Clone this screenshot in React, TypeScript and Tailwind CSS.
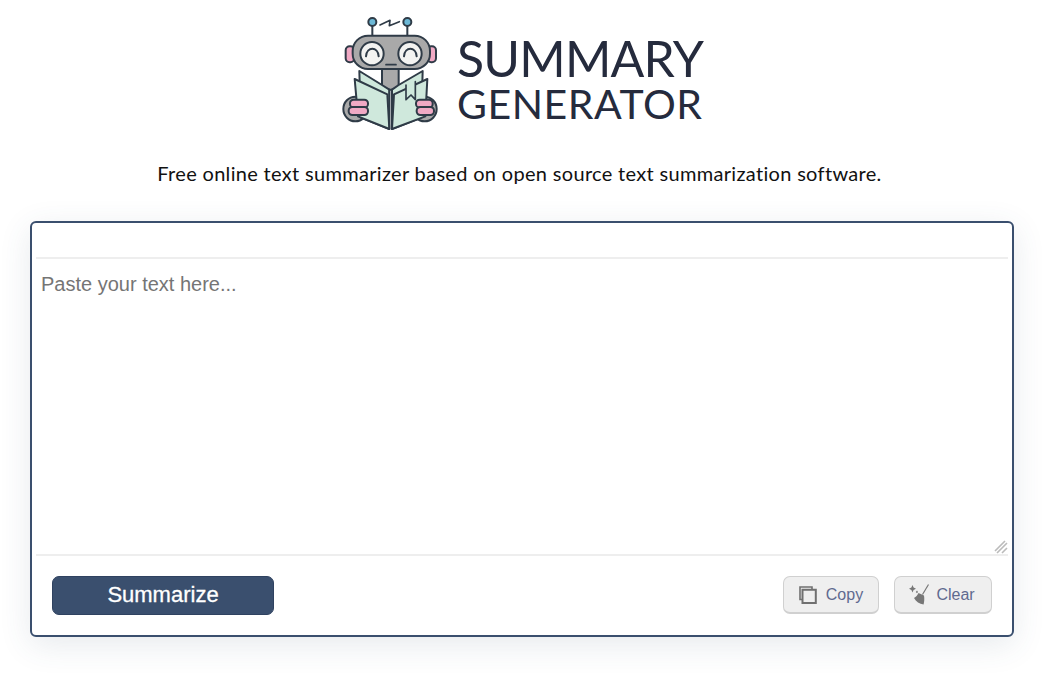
import React from "react";

const Robot = () => (
  <svg viewBox="0 0 360 390" className="w-[120px] h-[130px] shrink-0" fill="none" stroke="#2f3b47" strokeWidth="6" strokeLinejoin="round" strokeLinecap="round">
    {/* antenna */}
    <path d="M127 62V92M232 62V92" />
    <circle cx="127" cy="51" r="12" fill="#6cb8d6" />
    <circle cx="232" cy="51" r="12" fill="#6cb8d6" />
    <path d="M150 60L180 46L178 62L208 50" strokeWidth="5" />
    {/* ears */}
    <rect x="47" y="124" width="26" height="48" rx="12" fill="#f0a9c4" />
    <rect x="292" y="124" width="26" height="48" rx="12" fill="#f0a9c4" />
    {/* hips */}
    <ellipse cx="76" cy="312" rx="36" ry="37" fill="#a9a9a9" />
    <ellipse cx="284" cy="312" rx="36" ry="37" fill="#a9a9a9" />
    {/* head */}
    <rect x="156" y="188" width="50" height="66" fill="#a9a9a9" />
    <rect x="68" y="92" width="232" height="100" rx="46" fill="#a9a9a9" />
    <circle cx="126" cy="146" r="35" fill="#f3f3f1" />
    <circle cx="240" cy="146" r="35" fill="#f3f3f1" />
    <path d="M108 154C110 124 144 124 146 154M222 154C224 124 258 124 260 154" />
    <path d="M168 179H198" strokeWidth="5" />
    {/* book */}
    <path d="M88 198L156 240L178 254V372L92 338Z" fill="#cfe8dc" />
    <path d="M278 198L206 240L186 254V372L274 338Z" fill="#cfe8dc" />
    <path d="M74 222L172 268L178 372L84 334Z" fill="#cfe8dc" />
    <path d="M292 222L192 268L186 372L286 334Z" fill="#cfe8dc" />
    <path d="M178 254V372M186 254V372" strokeWidth="5" />
    <path d="M228 240V284L243 270L256 284V230" fill="#cfe8dc" strokeWidth="5" />
    {/* fingers */}
    <rect x="60" y="284" width="54" height="24" rx="11" fill="#f0a9c4" />
    <rect x="56" y="306" width="58" height="24" rx="11" fill="#f0a9c4" />
    <rect x="258" y="284" width="50" height="24" rx="11" fill="#f0a9c4" />
    <rect x="260" y="306" width="52" height="24" rx="11" fill="#f0a9c4" />
  </svg>
);

const CopyIcon = () => (
  <svg viewBox="0 0 18 18" className="w-[18px] h-[18px]" fill="none" stroke="#707070" strokeWidth="1.6">
    <path d="M3.5 13.5H1V1H13V3.5" />
    <path d="M3.5 3.8H16.8V17H3.5Z" strokeWidth="2" />
  </svg>
);

const Broom = () => (
  <svg viewBox="0 0 21 21" className="w-[21px] h-[21px]" fill="#777">
    <path d="M19.5 0.5L13.5 10.5" stroke="#777" strokeWidth="1.2" fill="none" />
    <path d="M9.5 9L15 11.5C15.6 15 15.2 18 14.6 20.5C10.5 20 7 17.5 5 14C7 13 8.5 11.3 9.5 9Z" />
    <path d="M3.5 1L4.6 3.6L7 4.8L4.6 6L3.5 8.5L2.4 6L0 4.8L2.4 3.6Z" />
    <path d="M8 6.5L9 8L8 9.3L6.8 8Z" />
  </svg>
);

const App: React.FC = () => {
  return (
    <div className="w-[1056px] h-[674px] bg-white overflow-hidden font-['Liberation_Sans',sans-serif]">
      {/* Header */}
      <div className="flex items-start pt-[5px] h-[135px] pl-[330px]">
        <Robot />
        <div className="ml-[7px] mt-[28px] flex flex-col items-start font-['Lato',sans-serif] font-normal text-[#252b3d]">
          <span className="text-[50px] h-[50px] leading-[50px] tracking-[-0.8px] whitespace-nowrap">SUMMARY</span>
          <span className="text-[41px] h-[42px] leading-[42px] tracking-[0.55px] whitespace-nowrap">GENERATOR</span>
        </div>
      </div>

      <p className="text-center text-[20px] leading-[28px] mt-[24px] text-[#111] font-['Lato',sans-serif] tracking-[0.32px] pr-[17px]">
        Free online text summarizer based on open source text summarization software.
      </p>

      {/* Card */}
      <div className="mx-[30px] mt-[34px] w-[984px] h-[416px] border-2 border-[#3a4f6e] rounded-[6px] bg-white shadow-[0_8px_32px_rgba(58,79,110,0.12)] flex flex-col px-[4px]">
        <div className="h-[36px] border-b-2 border-[#eeeeee] shrink-0" />
        <div className="relative flex-1 border-b-2 border-[#eeeeee] px-[5px] pt-[13px] text-[20px] leading-[24px] text-[#757575]">
          Paste your text here...
          <svg viewBox="0 0 14 14" className="absolute right-[0px] bottom-[0px] w-[14px] h-[14px]" stroke="#bbb" strokeWidth="1.6">
            <path d="M1 11L11 1M3 13L13 3M8 13L13 8" />
          </svg>
        </div>
        <div className="h-[79px] shrink-0 flex items-start justify-between pl-[16px] pr-[16px] pt-[20px]">
          <button className="w-[222px] h-[39px] pb-[2px] rounded-[7px] bg-[#3a4f6e] border border-[#2f4260] text-white text-[22px] [-webkit-text-stroke:0.3px_white]">
            Summarize
          </button>
          <div className="flex gap-[15px]">
            <button className="w-[96px] h-[38px] rounded-[7px] bg-[#efefef] border border-[#d0d0d0] border-b-2 flex items-center justify-center gap-[9px] text-[16px] text-[#5f6a8f]">
              <CopyIcon />
              Copy
            </button>
            <button className="w-[98px] h-[38px] rounded-[7px] bg-[#efefef] border border-[#d0d0d0] border-b-2 flex items-center justify-center gap-[6px] pr-[2px] text-[16px] text-[#5f6a8f]">
              <Broom />
              Clear
            </button>
          </div>
        </div>
      </div>
    </div>
  );
};

export default App;
